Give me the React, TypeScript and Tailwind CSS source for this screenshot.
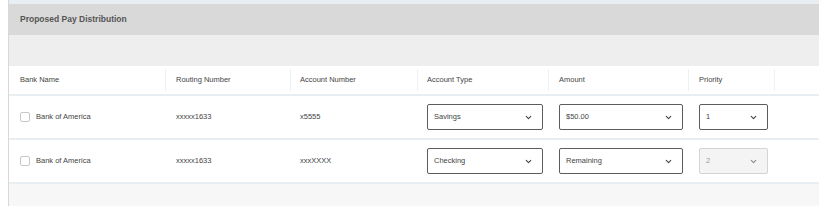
import { ChevronDown } from "lucide-react";

interface PayRow {
  bank: string;
  routing: string;
  account: string;
  type: string;
  amount: string;
  priority: string;
  priorityDisabled?: boolean;
}

const rows: PayRow[] = [
  { bank: "Bank of America", routing: "xxxxx1633", account: "x5555", type: "Savings", amount: "$50.00", priority: "1" },
  { bank: "Bank of America", routing: "xxxxx1633", account: "xxxXXXX", type: "Checking", amount: "Remaining", priority: "2", priorityDisabled: true },
];

const cols = "grid grid-cols-[157px_125px_127px_131px_140px_86px_1fr]";

function SelectBox({ value, width, disabled }: { value: string; width: string; disabled?: boolean }) {
  return (
    <div
      className={`${width} h-[26px] flex items-center justify-between pl-[6px] pr-[9px] rounded-[2px] border ${
        disabled ? "bg-[#f4f4f4] border-[#d4d4d4] text-[#999]" : "bg-white border-[#5c5c5c] text-[#444]"
      }`}
    >
      <span className="text-[7.5px] -mt-[1px]">{value}</span>
      <ChevronDown size={9} strokeWidth={3} className={disabled ? "text-[#888]" : "text-[#444]"} />
    </div>
  );
}

export default function App() {
  return (
    <div className="w-[827px] h-[206px] bg-white overflow-hidden font-['Liberation_Sans',Arial,sans-serif]">
      <div className="ml-[8px] w-[811px] h-full border-l border-[#d8d8d8] flex flex-col">
        <div className="h-[4px] bg-[#e9eef2]" />
        <div className="h-[31px] bg-[#d9d9d9] flex items-center pl-[11px]">
          <h2 className="text-[8.5px] font-bold text-[#555]">Proposed Pay Distribution</h2>
        </div>
        <div className="h-[31px] bg-[#eeeeee]" />

        <div className={`${cols} h-[30px] bg-white border-b-2 border-[#e8eef2] text-[7.5px] text-[#444]`}>
          <div className="flex items-center pl-[11px] border-r border-[#eef1f4] my-[3px]">Bank Name</div>
          <div className="flex items-center pl-[10px] border-r border-[#eef1f4] my-[3px]">Routing Number</div>
          <div className="flex items-center pl-[9px] border-r border-[#eef1f4] my-[3px]">Account Number</div>
          <div className="flex items-center pl-[9px] border-r border-[#eef1f4] my-[3px]">Account Type</div>
          <div className="flex items-center pl-[10px] border-r border-[#eef1f4] my-[3px]">Amount</div>
          <div className="flex items-center pl-[10px] border-r border-[#eef1f4] my-[3px]">Priority</div>
          <div />
        </div>

        {rows.map((r, i) => (
          <div key={i} className={`${cols} h-[44px] bg-white border-b-2 border-[#e8eef2] text-[7.5px] text-[#444]`}>
            <div className="flex items-center pl-[11px] gap-[6px]">
              <span className="w-[10px] h-[10px] rounded-[2px] border border-[#c8c8c8] bg-white" />
              <span>{r.bank}</span>
            </div>
            <div className="flex items-center pl-[10px]">{r.routing}</div>
            <div className="flex items-center pl-[9px]">{r.account}</div>
            <div className="flex items-center pl-[9px]">
              <SelectBox value={r.type} width="w-[116px]" />
            </div>
            <div className="flex items-center pl-[10px]">
              <SelectBox value={r.amount} width="w-[124px]" />
            </div>
            <div className="flex items-center pl-[10px]">
              <SelectBox value={r.priority} width="w-[69px]" disabled={r.priorityDisabled} />
            </div>
            <div />
          </div>
        ))}

        <div className="flex-1 bg-[#f7f7f7]" />
      </div>
    </div>
  );
}
